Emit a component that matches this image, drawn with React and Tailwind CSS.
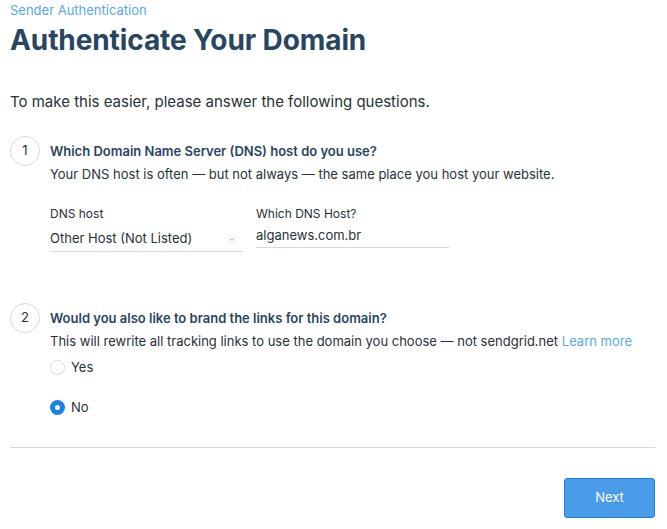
import React from "react";

const StepCircle = ({ n }) => (
  <div className="w-[30px] h-[30px] shrink-0 rounded-full border border-[#d4dadf] flex items-center justify-center text-[13px] text-[#263238]">
    {n}
  </div>
);

const Radio = ({ checked, label }) => (
  <label className="flex items-center gap-[6px] text-[13px] text-[#263238]">
    {checked ? (
      <span className="w-[15px] h-[15px] rounded-full bg-[#1a82e2] flex items-center justify-center">
        <span className="w-[5px] h-[5px] rounded-full bg-white" />
      </span>
    ) : (
      <span className="w-[15px] h-[15px] rounded-full border border-[#d4dadf] bg-white" />
    )}
    {label}
  </label>
);

const App = () => {
  return (
    <div
      className="w-[667px] h-[529px] bg-white px-[10px] overflow-hidden"
      style={{ fontFamily: "Inter, 'Noto Sans', sans-serif" }}
    >
      {/* Header */}
      <div className="pt-[2px] text-[13px] leading-[17px] text-[#58a9ec]">Sender Authentication</div>
      <h1 className="mt-[3px] text-[28px] leading-[36px] font-bold text-[#294661] tracking-[-0.1px]">
        Authenticate Your Domain
      </h1>
      <p className="mt-[34px] text-[15px] leading-[20px] text-[#263238]">
        To make this easier, please answer the following questions.
      </p>

      {/* Step 1 */}
      <div className="mt-[24px] flex gap-[10px]">
        <StepCircle n="1" />
        <div className="pt-[6px]">
          <div className="text-[13px] leading-[18px] font-semibold text-[#294661]">
            Which Domain Name Server (DNS) host do you use?
          </div>
          <div className="mt-[5px] text-[13px] leading-[18px] text-[#263238]">
            Your DNS host is often — but not always — the same place you host your website.
          </div>
          <div className="mt-[23px] flex gap-[13px]">
            <div className="w-[193px]">
              <div className="text-[12px] leading-[16px] text-[#263238]">DNS host</div>
              <div className="mt-[4px] h-[26px] flex items-center justify-between border-b border-[#d4dadf] text-[13px] text-[#263238]">
                <span>Other Host (Not Listed)</span>
                <svg width="10" height="10" viewBox="0 0 10 10" className="mr-[6px]">
                  <path d="M2.5 4 L5 6.5 L7.5 4" fill="none" stroke="#9aa5ae" strokeWidth="1" />
                </svg>
              </div>
            </div>
            <div className="w-[193px]">
              <div className="text-[12px] leading-[16px] text-[#263238]">Which DNS Host?</div>
              <div className="mt-[2px] h-[24px] flex items-center border-b border-[#d4dadf] text-[13px] text-[#263238]">
                alganews.com.br
              </div>
            </div>
          </div>
        </div>
      </div>

      {/* Step 2 */}
      <div className="mt-[51px] flex gap-[10px]">
        <StepCircle n="2" />
        <div className="pt-[6px]">
          <div className="text-[13px] leading-[18px] font-semibold text-[#294661]">
            Would you also like to brand the links for this domain?
          </div>
          <div className="mt-[5px] text-[13px] leading-[18px] text-[#263238]">
            This will rewrite all tracking links to use the domain you choose — not sendgrid.net{" "}
            <a className="text-[#58a9ec]">Learn more</a>
          </div>
          <div className="mt-[8px] flex flex-col gap-[20px]">
            <Radio label="Yes" />
            <Radio checked label="No" />
          </div>
        </div>
      </div>

      <div className="mt-[30px] w-[645px] border-t border-[#d4dadf]" />

      <div className="w-[645px] flex justify-end mt-[30px]">
        <button className="w-[91px] h-[40px] rounded-[3px] bg-[#4a9be8] border border-[#1a82e2] text-white text-[13px]">
          Next
        </button>
      </div>
    </div>
  );
};

export default App;
